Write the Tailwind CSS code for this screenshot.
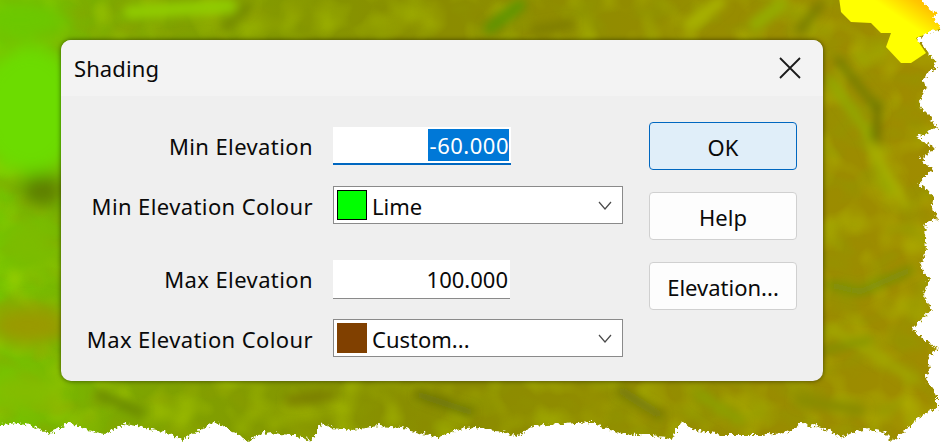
<!DOCTYPE html>
<html lang="en">

<head>
    <meta charset="UTF-8">
    <title>Shading</title>
    <script src="https://cdn.jsdelivr.net/npm/@tailwindcss/browser@4"></script>
</head>

<body class="bg-white">
    <div class="relative w-[946px] h-[447px] overflow-hidden font-['Noto_Sans',sans-serif] text-[#0a0a0a]">
        <!-- terrain behind the dialog -->
        <svg class="absolute left-0 top-0" width="946" height="447" viewBox="0 0 946 447">
            <defs>
                <linearGradient id="base" x1="0" y1="0" x2="1" y2="0">
                    <stop offset="0" stop-color="#74c400" />
                    <stop offset="0.15" stop-color="#7ea400" />
                    <stop offset="0.45" stop-color="#8a8c00" />
                    <stop offset="1" stop-color="#a08c00" />
                </linearGradient>
                <linearGradient id="peak" x1="0" y1="1" x2="1" y2="0">
                    <stop offset="0.6" stop-color="#ffff00" />
                    <stop offset="0.78" stop-color="#ffc800" />
                    <stop offset="1" stop-color="#ff9a00" />
                </linearGradient>
                <filter id="soft" x="-30%" y="-30%" width="160%" height="160%">
                    <feGaussianBlur stdDeviation="9" />
                </filter>
                <filter id="ridge" x="-30%" y="-30%" width="160%" height="160%">
                    <feGaussianBlur stdDeviation="5" />
                </filter>
                <filter id="darkMottle" x="0" y="0" width="100%" height="100%">
                    <feTurbulence type="fractalNoise" baseFrequency="0.028 0.04" numOctaves="2" seed="7" />
                    <feColorMatrix values="0 0 0 0 0.27  0 0 0 0 0.33  0 0 0 0 0  2.6 0 0 0 -1.15" />
                </filter>
                <filter id="greenMottle" x="0" y="0" width="100%" height="100%">
                    <feTurbulence type="fractalNoise" baseFrequency="0.03 0.028" numOctaves="2" seed="21" />
                    <feColorMatrix values="0 0 0 0 0.52  0 0 0 0 0.72  0 0 0 0 0  2.6 0 0 0 -1.15" />
                </filter>
                <filter id="rough" x="-5%" y="-5%" width="110%" height="110%">
                    <feTurbulence type="turbulence" baseFrequency="0.18" numOctaves="2" seed="4" result="n" />
                    <feDisplacementMap in="SourceGraphic" in2="n" scale="7" xChannelSelector="R" yChannelSelector="G" />
                </filter>
                <mask id="land" maskUnits="userSpaceOnUse" x="0" y="0" width="946" height="447">
                    <polygon fill="white" filter="url(#rough)" points="-30,-30 920,-30 920,0 926,5 935,12 931,17 940,27 925,31 915,38 921,43 927,52 933,57 934,67 926,72 922,80 925,88 916,100 921,108 929,116 936,127 925,131 916,137 926,142 933,147 922,154 920,160 933,167 923,174 916,182 925,188 933,197 928,205 936,217 925,220 923,234 924,250 918,266 928,277 924,285 921,294 930,307 922,316 910,327 922,338 936,347 926,355 928,368 923,377 931,386 935,394 935,406 923,412 914,418 907,426 890,439 882,431 866,427 853,430 840,436 828,430 813,424 806,425 800,420 792,427 783,431 760,433 720,433 690,428 680,419 675,428 670,437 650,434 623,432 607,428 590,420 560,422 530,424 522,430 516,435 500,430 473,426 455,428 437,436 420,432 400,426 377,424 350,428 330,426 320,421 315,430 310,439 290,433 270,431 255,433 247,439 235,432 222,424 213,421 200,428 190,433 180,439 170,432 150,428 135,424 123,422 113,427 103,432 85,428 67,421 57,427 47,432 35,426 17,421 0,423 -30,423" />
                </mask>
            </defs>
            <g mask="url(#land)">
                <rect width="946" height="447" fill="url(#base)" />
                <rect width="946" height="447" filter="url(#greenMottle)" opacity="0.35" />
                <rect width="946" height="447" filter="url(#darkMottle)" opacity="0.45" />
                <g filter="url(#soft)">
                    <ellipse cx="30" cy="110" rx="55" ry="65" fill="#6cdc00" />
                    <ellipse cx="20" cy="20" rx="50" ry="20" fill="#6cc800" />
                    <ellipse cx="42" cy="190" rx="22" ry="16" fill="#5d7c00" />
                    <ellipse cx="28" cy="325" rx="40" ry="20" fill="#9a9a00" />
                    <ellipse cx="28" cy="245" rx="25" ry="22" fill="#7cbc00" />
                    <ellipse cx="25" cy="392" rx="35" ry="16" fill="#84bc00" />
                </g>
                <g filter="url(#ridge)" fill="none" stroke-linecap="round">
                    <path d="M130 12 L230 6" stroke="#90cc00" stroke-width="14" />
                    <path d="M225 28 L250 5" stroke="#6f8400" stroke-width="7" />
                    <path d="M490 28 L520 5" stroke="#5f9400" stroke-width="12" />
                    <path d="M535 30 L570 24" stroke="#7b7c00" stroke-width="8" />
                    <path d="M690 25 L720 2" stroke="#a8b200" stroke-width="12" />
                    <path d="M755 25 L780 5" stroke="#94ac00" stroke-width="14" />
                    <path d="M800 30 L820 5" stroke="#767c00" stroke-width="8" />
                    <path d="M830 80 L866 130 L890 190" stroke="#93a800" stroke-width="10" />
                    <path d="M838 60 L878 110" stroke="#6f7c00" stroke-width="7" />
                    <path d="M878 105 L875 145" stroke="#6a6e00" stroke-width="8" />
                    <path d="M872 145 L905 205" stroke="#a8b000" stroke-width="8" />
                    <path d="M830 285 L860 292 L910 270" stroke="#74900a" stroke-width="7" />
                    <path d="M832 330 L865 348 L915 380" stroke="#a0a600" stroke-width="9" />
                    <path d="M825 350 L870 340" stroke="#7c9000" stroke-width="6" />
                    <path d="M100 395 L140 412" stroke="#6a8800" stroke-width="9" />
                    <path d="M290 400 L330 395" stroke="#7a7e00" stroke-width="10" />
                    <path d="M420 395 L470 412" stroke="#66700a" stroke-width="8" />
                    <path d="M620 390 L660 415" stroke="#71780a" stroke-width="8" />
                    <path d="M700 395 L740 420" stroke="#8ba000" stroke-width="10" />
                    <path d="M800 400 L860 410" stroke="#888c00" stroke-width="12" />
                </g>
                <polygon fill="url(#peak)" points="838,-10 841,12 851,22 871,23 881,33 891,33 886,47 901,63 911,63 926,53 916,38 945,27 930,-10" />
            </g>
        </svg>

        <div class="absolute left-[61px] top-[40px] w-[762px] h-[341px] rounded-[10px] overflow-hidden bg-[#efefef] shadow-[0_0_5px_rgba(0,0,0,0.55)]">
            <div class="h-[56px] bg-[#f3f3f3] flex items-center justify-between pl-[13px] pr-[22px]">
                <span class="text-[22px] leading-none tracking-[0.1px]">Shading</span>
                <svg width="22" height="22" viewBox="0 0 22 22" fill="none" stroke="#1a1a1a" stroke-width="1.8">
                    <path d="M1 1L21 21M21 1L1 21" />
                </svg>
            </div>

            <div class="flex pt-[26px]">
                <div class="w-[562px] pt-[5px] text-[22px] leading-none">
                    <div class="flex items-center h-[38px]">
                        <label class="w-[252px] text-right tracking-[0.4px]">Min Elevation</label>
                        <div class="ml-[20px] w-[178px] h-[38px] bg-white border-b-2 border-[#0067c0] flex justify-end items-start pt-[2px] pr-[2px]">
                            <span class="bg-[#0078d7] text-white h-[32px] w-[81px] flex items-center justify-end tracking-[0.5px]">-60.000</span>
                        </div>
                    </div>
                    <div class="flex items-center h-[38px] mt-[21px]">
                        <label class="w-[252px] text-right tracking-[0.4px] pt-[2px]">Min Elevation Colour</label>
                        <div class="ml-[20px] w-[290px] h-[38px] bg-white border border-[#8a8a8a] flex items-center pl-[3px] pr-[10px]">
                            <span class="w-[30px] h-[30px] bg-[#00ff00] border border-black"></span>
                            <span class="ml-[5px] flex-1 pt-[2px]">Lime</span>
                            <svg width="14" height="9" viewBox="0 0 14 9" fill="none" stroke="#4a4a4a" stroke-width="1.2">
                                <path d="M1 1L7 8L13 1" />
                            </svg>
                        </div>
                    </div>
                    <div class="flex items-center h-[39px] mt-[36px]">
                        <label class="w-[252px] text-right tracking-[0.4px] pb-[2px]">Max Elevation</label>
                        <div class="ml-[20px] w-[177px] h-[39px] bg-white border-b border-[#8a8a8a] flex justify-end items-center pr-[2px]">100.000</div>
                    </div>
                    <div class="flex items-center h-[38px] mt-[20px]">
                        <label class="w-[252px] text-right tracking-[0.4px] pt-[2px]">Max Elevation Colour</label>
                        <div class="ml-[20px] w-[290px] h-[38px] bg-white border border-[#8a8a8a] flex items-center pl-[3px] pr-[10px]">
                            <span class="w-[30px] h-[30px] bg-[#804000]"></span>
                            <span class="ml-[5px] flex-1 pt-[2px]">Custom...</span>
                            <svg width="14" height="9" viewBox="0 0 14 9" fill="none" stroke="#4a4a4a" stroke-width="1.2">
                                <path d="M1 1L7 8L13 1" />
                            </svg>
                        </div>
                    </div>
                </div>

                <div class="ml-[26px] w-[148px] flex flex-col gap-[22px] text-[22px] leading-none">
                    <button class="h-[48px] pt-[2px] rounded-[4px] border border-[#0067c0] bg-[#e0eef9]">OK</button>
                    <button class="h-[48px] pt-[2px] rounded-[4px] border border-[#d0d0d0] bg-[#fdfdfd]">Help</button>
                    <button class="h-[48px] pt-[2px] rounded-[4px] border border-[#d0d0d0] bg-[#fdfdfd]">Elevation...</button>
                </div>
            </div>
        </div>
    </div>
</body>

</html>
